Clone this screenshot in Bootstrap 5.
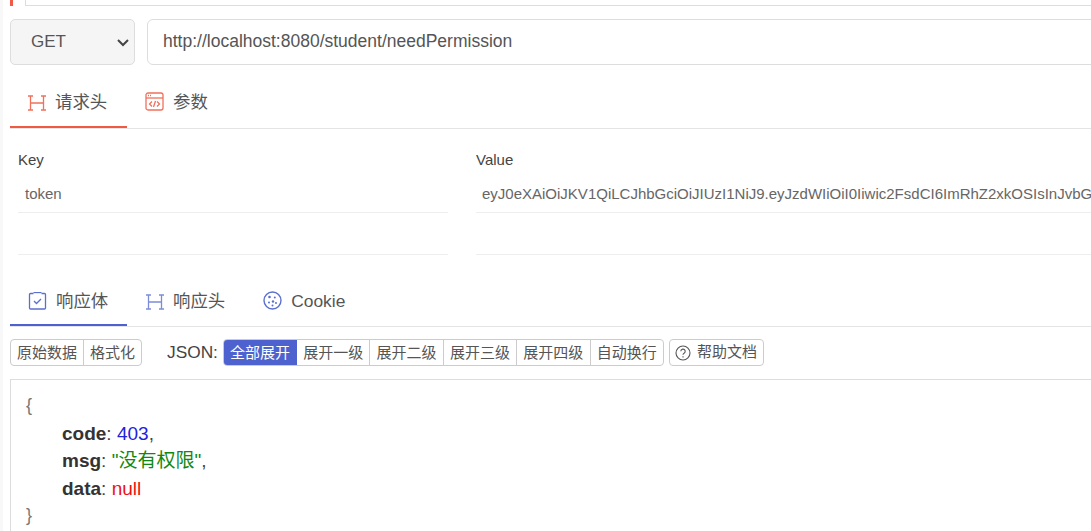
<!DOCTYPE html>
<html lang="zh">
<head>
<meta charset="utf-8">
<title>API</title>
<link rel="stylesheet" href="https://cdn.jsdelivr.net/npm/bootstrap@5.3.0/dist/css/bootstrap.min.css">
<style>
html,body{height:531px;overflow:hidden;background:#fff}
body{font-family:"Liberation Sans","Noto Sans CJK SC",sans-serif;color:#555;width:1200px;padding-left:7px;border-left:3px solid #f8f8f8}
.topstrip{height:6px;gap:12px}
.topmark{width:3px;background:#f05a46}
.topbox{flex:1;border:1px solid #ddd;border-top:0}
.urlrow{margin-top:13px;gap:12px;height:46px}
.methodbox{width:125px;background:#f5f5f5;border:1px solid #ddd;border-radius:5px;padding:0 4px 0 20px;font-size:17px;color:#555}
.urlbox{flex:1;border:1px solid #ddd;border-radius:6px;padding:0 15px 2px;font-size:17.5px;color:#555}
.tabrow{border-bottom:1px solid #e4e4e4;height:72px}
.tabrow.first{margin-top:9px;height:55px}
.tabitem{display:flex;align-items:flex-end;gap:9px;padding:0 19px 10px 18px;font-size:17.4px;line-height:26px;color:#555;height:100%;margin-bottom:-1px;border-bottom:2px solid transparent;white-space:nowrap}
.tabrow.first .tabitem{padding-bottom:11px}
.tabitem svg{flex:none;margin-bottom:4px}
.tabitem.redon{border-bottom-color:#ef5a43;width:117px}
.tabitem.blueon{border-bottom-color:#4d62cf;width:117px;padding-right:0}
.tabwide{padding-left:19px;padding-right:20px}
.kvgrid{display:grid;grid-template-columns:430px 700px;column-gap:28px;margin-left:8px}
.kvhead{font-size:15px;color:#444;height:20px;line-height:20px;margin-top:21px}
.kvcell{height:42px;border-bottom:1px solid #eee;font-size:15px;line-height:20px;padding:14px 6px 0;color:#666;white-space:nowrap}
.firstcell{height:43px}
.keycell{padding-left:7px}
.toolrow{margin-top:12px;height:27px;align-items:center}
.segbtns{border:1px solid #ccc;border-radius:4px;display:flex;height:27px;overflow:hidden}
.segbtn{font-size:15px;line-height:25px;padding:0 6.2px;color:#555;border-left:1px solid #ccc;white-space:nowrap}
.segbtn:first-child{border-left:0}
.segplain .segbtn{padding:0 6px}
.segbtn.chosen{background:#4d62cf;color:#fff;margin:-1px 0 -1px -1px;line-height:27px;padding:0 7px;border-left:0}
.jsonword{font-size:17.3px;color:#444;margin:0 5px 0 25px}
.helpbtn{margin-left:5px;border:1px solid #ccc;border-radius:4px;height:27px;font-size:15px;color:#555;padding:0 6px 0 5px;gap:6px}
.jsonbox{margin-top:13px;border:1px solid #ddd;border-right:0;padding:12px 15px;height:170px;font-size:19px;line-height:27.5px;color:#444}
.jsonrow{padding-left:36px}
.jsonkey{font-weight:700;color:#333}
.jnum{color:#2222dd}.jstr{color:#118811}.jnull{color:#ee1111}
.brace{color:#777;font-size:18px}
</style>
</head>
<body>
<div class="d-flex topstrip"><div class="topmark"></div><div class="topbox"></div></div>

<div class="d-flex urlrow">
  <div class="d-flex align-items-center justify-content-between methodbox">GET
    <svg width="14" height="14" viewBox="0 0 14 14" fill="none" stroke="#444" stroke-width="2"><path d="M2 5l5 5 5-5"/></svg>
  </div>
  <div class="d-flex align-items-center urlbox">http://localhost:8080/student/needPermission</div>
</div>

<div class="d-flex tabrow first">
  <div class="tabitem redon">
    <svg width="18" height="16" viewBox="0 0 18 16" fill="none" stroke="#f0705c" stroke-width="1.3"><path d="M0 1h5M2.500 1v14M0 15h5M13 1h5M15.500 1v14M13 15h5M2.500 8h13"/></svg>
    <span>请求头</span>
  </div>
  <div class="tabitem">
    <svg width="19" height="19" viewBox="0 0 19 19" fill="none" stroke="#f0705c" stroke-width="1.3"><rect x="1" y="1" width="17" height="17" rx="2"/><path d="M1 6h17"/><path d="M3 3.500h4" stroke-dasharray="1 1"/><path d="M7 9.500l-2.500 2.500 2.500 2.500M12 9.500l2.500 2.500-2.500 2.500M10.500 9l-2 6"/></svg>
    <span>参数</span>
  </div>
</div>

<div class="kvgrid">
  <div class="kvhead">Key</div><div class="kvhead">Value</div>
  <div class="kvcell firstcell keycell">token</div>
  <div class="kvcell firstcell">eyJ0eXAiOiJKV1QiLCJhbGciOiJIUzI1NiJ9.eyJzdWIiOiI0Iiwic2FsdCI6ImRhZ2xkOSIsInJvbG</div>
  <div class="kvcell"></div><div class="kvcell"></div>
</div>

<div class="d-flex tabrow">
  <div class="tabitem blueon">
    <svg width="19" height="18" viewBox="0 0 18 18" fill="none" stroke="#5b6fd0" stroke-width="1.3"><path d="M5 1.500H2a1 1 0 0 0-1 1V16a1 1 0 0 0 1 1h14a1 1 0 0 0 1-1V2.500a1 1 0 0 0-1-1h-3"/><path d="M5 .5h8"/><path d="M5.500 9l2.500 2.500 4.500-4.500"/></svg>
    <span>响应体</span>
  </div>
  <div class="tabitem tabwide">
    <svg width="18" height="16" viewBox="0 0 18 16" fill="none" stroke="#7c8cd8" stroke-width="1.3"><path d="M0 1h5M2.500 1v14M0 15h5M13 1h5M15.500 1v14M13 15h5M2.500 8h13"/></svg>
    <span>响应头</span>
  </div>
  <div class="tabitem">
    <svg width="19" height="19" viewBox="0 0 19 19" fill="none" stroke="#5b6fd0" stroke-width="1.4"><circle cx="9.500" cy="9.500" r="8.500"/><g fill="#5b6fd0" stroke="none"><circle cx="6.500" cy="6" r="1.300"/><circle cx="11.800" cy="6.500" r="1"/><circle cx="6" cy="11.500" r="1"/><circle cx="10" cy="10.500" r="1.200"/><circle cx="13" cy="12" r="1"/><circle cx="9.500" cy="14.500" r="1"/></g></svg>
    <span>Cookie</span>
  </div>
</div>

<div class="d-flex toolrow">
  <div class="segbtns segplain"><div class="segbtn">原始数据</div><div class="segbtn">格式化</div></div>
  <div class="jsonword">JSON:</div>
  <div class="segbtns"><div class="segbtn chosen">全部展开</div><div class="segbtn border-start-0">展开一级</div><div class="segbtn">展开二级</div><div class="segbtn">展开三级</div><div class="segbtn">展开四级</div><div class="segbtn">自动换行</div></div>
  <div class="d-flex align-items-center helpbtn">
    <svg width="16" height="16" viewBox="0 0 16 16" fill="none" stroke="#555" stroke-width="1.1"><circle cx="8" cy="8" r="7"/><path d="M5.800 6.300a2.200 2.200 0 1 1 3.300 1.900c-.7.400-1.100.8-1.100 1.600"/><path d="M8 11.200v1.200"/></svg>
    <span>帮助文档</span>
  </div>
</div>

<div class="jsonbox">
  <div class="brace">{</div>
  <div class="jsonrow"><span class="jsonkey">code</span>: <span class="jnum">403</span>,</div>
  <div class="jsonrow"><span class="jsonkey">msg</span>: <span class="jstr">"没有权限"</span>,</div>
  <div class="jsonrow"><span class="jsonkey">data</span>: <span class="jnull">null</span></div>
  <div class="brace">}</div>
</div>
<script src="https://cdn.jsdelivr.net/npm/bootstrap@5.3.0/dist/js/bootstrap.bundle.min.js"></script>
</body>
</html>
